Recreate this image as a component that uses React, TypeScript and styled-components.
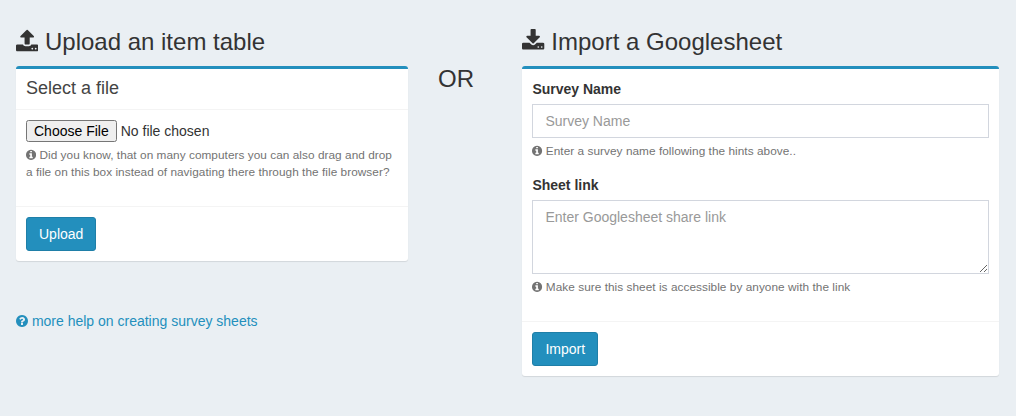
import React from 'react';
import styled, { createGlobalStyle } from 'styled-components';

const GlobalStyle = createGlobalStyle`
  *, *::before, *::after { box-sizing: border-box; }
  html, body { margin: 0; padding: 0; }
  body {
    min-height: 100vh;
    background: #eaeff3;
    color: #333;
    font: 14px/20px "Liberation Sans", Arial, sans-serif;
  }
  input, button, textarea { font-family: inherit; font-size: inherit; }
`;

const DISC =
  'zm%q0 209-103 385.5t-279.5 279.5-385.5 103-385.5-103-279.5-279.5-103-385.5 103-385.5 279.5-279.5 385.5-103 385.5 103 279.5 279.5 103 385.5z';

const icons = {
  upload: {
    viewBox: '64 0 1664 1792',
    ratio: 1664 / 1792,
    path: 'M1344 1472q0-26-19-45t-45-19-45 19-19 45 19 45 45 19 45-19 19-45zm256 0q0-26-19-45t-45-19-45 19-19 45 19 45 45 19 45-19 19-45zm128-224v320q0 40-28 68t-68 28h-1472q-40 0-68-28t-28-68v-320q0-40 28-68t68-28h427q21 56 70.5 92t110.5 36h256q61 0 110.5-36t70.5-92h427q40 0 68 28t28 68zm-325-648q-17 40-59 40h-256v448q0 26-19 45t-45 19h-256q-26 0-45-19t-19-45v-448h-256q-42 0-59-40-17-39 14-69l448-448q18-19 45-19t45 19l448 448q31 30 14 69z',
  },
  download: {
    viewBox: '64 0 1664 1792',
    ratio: 1664 / 1792,
    path: 'M1344 1344q0-26-19-45t-45-19-45 19-19 45 19 45 45 19 45-19 19-45zm256 0q0-26-19-45t-45-19-45 19-19 45 19 45 45 19 45-19 19-45zm128-224v320q0 40-28 68t-68 28h-1472q-40 0-68-28t-28-68v-320q0-40 28-68t68-28h465l135 136q58 56 136 56t136-56l136-136h464q40 0 68 28t28 68zm-325-569q17 41-14 70l-448 448q-18 19-45 19t-45-19l-448-448q-31-29-14-70 17-39 59-39h256v-448q0-26 19-45t45-19h256q26 0 45 19t19 45v448h256q42 0 59 39z',
  },
  info: {
    viewBox: '128 0 1536 1792',
    ratio: 1536 / 1792,
    path:
      'M1152 1376v-160q0-14-9-23t-23-9h-96v-512q0-14-9-23t-23-9h-320q-14 0-23 9t-9 23v160q0 14 9 23t23 9h96v320h-96q-14 0-23 9t-9 23v160q0 14 9 23t23 9h448q14 0 23-9t9-23zm-128-896v-160q0-14-9-23t-23-9h-192q-14 0-23 9t-9 23v160q0 14 9 23t23 9h192q14 0 23-9t9-23' +
      DISC.replace('%', '640 416'),
  },
  question: {
    viewBox: '128 0 1536 1792',
    ratio: 1536 / 1792,
    path:
      'M1024 1376v-192q0-14-9-23t-23-9h-192q-14 0-23 9t-9 23v192q0 14 9 23t23 9h192q14 0 23-9t9-23zm256-672q0-88-55.5-163t-138.5-116-170-41q-243 0-371 213-15 24 8 42l132 100q7 6 19 6 16 0 25-12 53-68 86-92 34-24 86-24 48 0 85.5 26t37.5 59q0 38-20 61t-68 45q-63 28-115.5 86.5t-52.5 125.5v36q0 14 9 23t23 9h192q14 0 23-9t9-23q0-19 21.5-49.5t54.5-49.5q32-18 49-28.5t46-35 44.5-48 28-60.5 12.5-81' +
      DISC.replace('%', '384 192'),
  },
};

const Glyph = styled.svg<{ $ratio: number }>`
  display: inline-block;
  width: ${(p) => p.$ratio}em;
  height: 1em;
  vertical-align: -0.143em;
  fill: currentColor;
`;

function Icon({ name }: { name: keyof typeof icons }) {
  const icon = icons[name];
  return (
    <Glyph viewBox={icon.viewBox} $ratio={icon.ratio} aria-hidden="true">
      <path d={icon.path} />
    </Glyph>
  );
}

const Page = styled.main`
  display: grid;
  grid-template-columns: 392px 54.4px 476.4px;
  column-gap: 30px;
  align-items: start;
  padding: 29px 16px 0;
`;

const Column = styled.section`
  min-width: 0;
`;

const Heading = styled.h3`
  margin: 0 0 11px;
  font-size: 24px;
  font-weight: 500;
  line-height: 26px;
`;

const Divider = styled(Heading)`
  margin-top: 37px;
`;

const Box = styled.form`
  margin: 0 0 20px;
  border-top: 3px solid #238fbd;
  border-radius: 3px;
  background: #fff;
  box-shadow: 0 1px 1px rgba(0, 0, 0, 0.1);
`;

const BoxHeader = styled.header`
  padding: 10px 10px 12px;
  border-bottom: 1px solid #f4f4f4;
`;

const BoxTitle = styled.h4`
  margin: 0;
  color: #444;
  font-size: 18px;
  font-weight: 500;
  line-height: 18px;
`;

const BoxBody = styled.div`
  padding: 10px;
`;

const BoxFooter = styled.footer`
  padding: 10px;
  border-top: 1px solid #f4f4f4;
`;

const FormGroup = styled.div`
  margin-bottom: 15px;
`;

const Label = styled.label`
  display: block;
  margin-bottom: 5px;
  font-weight: 700;
`;

const FileInput = styled.input`
  display: block;
  width: 100%;
  height: 22px;
`;

const TextInput = styled.input`
  display: block;
  width: 100%;
  height: 34px;
  padding: 6px 12px;
  border: 1px solid #d2d6de;
  border-radius: 0;
  background: #fff;
  line-height: 20px;
  &::placeholder { color: #999; }
`;

const TextArea = styled.textarea`
  display: block;
  width: 100%;
  height: 74px;
  padding: 6px 12px;
  border: 1px solid #d2d6de;
  border-radius: 0;
  background: #fff;
  line-height: 20px;
  &::placeholder { color: #999; }
`;

const Help = styled.p`
  margin: 5px 0 0;
  color: #737373;
  font-size: 11.8px;
  letter-spacing: 0.048px;
  line-height: 17px;
`;

const Button = styled.button`
  display: block;
  height: 34px;
  padding: 6px 12px;
  border: 1px solid #1f7fa8;
  border-radius: 3px;
  background: #238fbd;
  color: #fff;
  line-height: 20px;
`;

const HelpLink = styled.a`
  display: block;
  margin-top: 50px;
  color: #238fbd;
  text-decoration: none;
`;

export default function App() {
  return (
    <>
      <GlobalStyle />
      <Page>
        <Column>
          <Heading><Icon name="upload" /> Upload an item table</Heading>
          <Box>
            <BoxHeader><BoxTitle>Select a file</BoxTitle></BoxHeader>
            <BoxBody>
              <FormGroup>
                <FileInput type="file" />
                <Help>
                  <Icon name="info" /> Did you know, that on many computers you can also drag and drop a file on this
                  box instead of navigating there through the file browser?
                </Help>
              </FormGroup>
            </BoxBody>
            <BoxFooter><Button type="button">Upload</Button></BoxFooter>
          </Box>
          <HelpLink href="#"><Icon name="question" /> more help on creating survey sheets</HelpLink>
        </Column>
        <Divider>OR</Divider>
        <Column>
          <Heading><Icon name="download" /> Import a Googlesheet</Heading>
          <Box>
            <BoxBody>
              <FormGroup>
                <Label htmlFor="survey-name">Survey Name</Label>
                <TextInput id="survey-name" placeholder="Survey Name" />
                <Help><Icon name="info" /> Enter a survey name following the hints above..</Help>
              </FormGroup>
              <FormGroup>
                <Label htmlFor="sheet-link">Sheet link</Label>
                <TextArea id="sheet-link" placeholder="Enter Googlesheet share link" />
                <Help><Icon name="info" /> Make sure this sheet is accessible by anyone with the link</Help>
              </FormGroup>
            </BoxBody>
            <BoxFooter><Button type="button">Import</Button></BoxFooter>
          </Box>
        </Column>
      </Page>
    </>
  );
}
